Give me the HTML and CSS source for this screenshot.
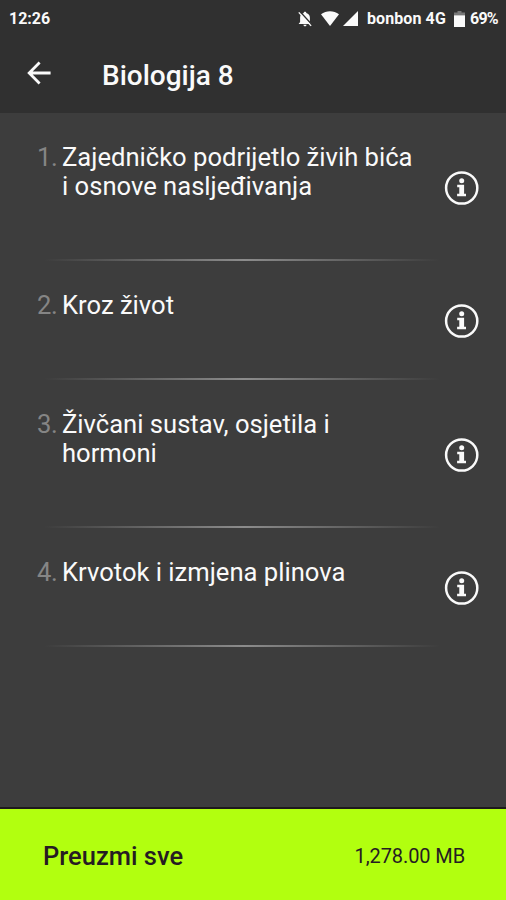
FILE: index.html
```html
<!DOCTYPE html>
<html lang="hr">
<head>
    <meta charset="UTF-8">
    <meta name="viewport" content="width=device-width, initial-scale=1.0">
    <title>Biologija 8</title>
    <link rel="stylesheet" href="styles.css">
</head>
<body>
    <!-- shared info icon -->
    <svg class="defs" width="0" height="0">
        <symbol id="info" viewBox="0 0 36 36">
            <circle cx="17.7" cy="18" r="15.6" fill="none" stroke="currentColor" stroke-width="2.5"/>
            <circle cx="17.7" cy="10.8" r="2.5" fill="currentColor"/>
            <path d="M13.2 14.8h6.900v9h1.900v2.400h-8.900v-2.400h2.200v-6.600h-2.100z" fill="currentColor"/>
        </symbol>
    </svg>

    <div class="screen">
        <header class="header">
            <div class="status-bar">
                <span class="time">12:26</span>
                <div class="status-icons">
                    <svg class="bell" width="16" height="18" viewBox="0 0 16 18">
                        <path d="M8 1.8c.8 0 1.3.5 1.3 1.3 2.3.6 3.6 2.3 3.6 4.6v4.4l1.5 1.8H1.6l1.5-1.8V7.7c0-2.3 1.3-4 3.6-4.6 0-.8.5-1.3 1.3-1.3zM6.4 14.7h3.2c0 .9-.7 1.5-1.6 1.5s-1.6-.6-1.6-1.5z" fill="currentColor"/>
                        <path d="M2.9 1.6l12.300 13.500" stroke="#303030" stroke-width="1.5"/>
                        <path d="M1.800 2.400l12.300 13.500" stroke="currentColor" stroke-width="1.4"/>
                    </svg>
                    <svg class="wifi" width="18" height="15" viewBox="0 0 18 15">
                        <path d="M0 3.3C5.3-.9 12.7-.9 18 3.3L9 15z" fill="currentColor"/>
                    </svg>
                    <svg class="signal" width="15" height="15" viewBox="0 0 15 15">
                        <path d="M15 0v15H0z" fill="currentColor"/>
                    </svg>
                    <span class="carrier">bonbon 4G</span>
                    <svg class="battery" width="11" height="16" viewBox="0 0 11 16">
                        <path d="M3.5 0h4v1.6H11V4.5H0V1.6h3.5z" fill="#777"/>
                        <path d="M0 4.3h11V16H0z" fill="currentColor"/>
                    </svg>
                    <span class="percent">69%</span>
                </div>
            </div>
            <div class="toolbar">
                <svg class="back" width="24" height="24" viewBox="0 0 24 24">
                    <path d="M12.6 1.6L2.2 12l10.4 10.4M2.6 12H23.6" fill="none" stroke="currentColor" stroke-width="2.800"/>
                </svg>
                <h1>Biologija 8</h1>
            </div>
        </header>

        <main class="content">
            <ol class="topics">
                <li class="topic tall">
                    <span class="num">1.</span>
                    <span class="name">Zajedničko podrijetlo živih bića<br>i osnove nasljeđivanja</span>
                </li>
                <li class="topic">
                    <span class="num">2.</span>
                    <span class="name">Kroz život</span>
                </li>
                <li class="topic tall">
                    <span class="num">3.</span>
                    <span class="name">Živčani sustav, osjetila i<br>hormoni</span>
                </li>
                <li class="topic">
                    <span class="num">4.</span>
                    <span class="name">Krvotok i izmjena plinova</span>
                </li>
            </ol>
            <div class="info-list">
                <svg class="info"><use href="#info"/></svg>
                <svg class="info"><use href="#info"/></svg>
                <svg class="info"><use href="#info"/></svg>
                <svg class="info"><use href="#info"/></svg>
            </div>
        </main>

        <footer class="download">
            <span class="label">Preuzmi sve</span>
            <span class="size">1,278.00 MB</span>
        </footer>
    </div>
</body>
</html>
```

FILE: styles.css
```css
* {
    margin: 0;
    padding: 0;
    box-sizing: border-box;
}

body {
    background: #3d3d3d;
    color: #fafafa;
    font-family: Roboto, "Liberation Sans", sans-serif;
}

.defs {
    position: absolute;
}

.screen {
    display: flex;
    flex-direction: column;
    height: 900px;
}

svg {
    flex-shrink: 0;
}

/* header */
.header {
    height: 113px;
    background: #303030;
}

.status-bar {
    display: flex;
    justify-content: space-between;
    align-items: center;
    height: 36px;
    padding: 1px 8px 0 9px;
    font-size: 16px;
    font-weight: 700;
    line-height: 35px;
}

.status-icons {
    display: flex;
    align-items: center;
}

.wifi {
    margin-left: 8px;
}

.signal {
    margin-left: 4px;
}

.carrier {
    margin-left: 9px;
    letter-spacing: 0.1px;
}

.battery {
    margin-left: 8px;
}

.percent {
    margin-left: 5px;
    letter-spacing: -0.7px;
}

.toolbar {
    display: flex;
    align-items: center;
    height: 77px;
    padding: 0 0 2px 27px;
}

.back {
    margin-bottom: 2px;
}

.toolbar h1 {
    margin: 4px 0 0 51px;
    font-size: 28px;
    font-weight: 500;
}

/* topics */
.content {
    display: flex;
    flex: 1;
    align-items: flex-start;
}

.topics {
    width: 444px;
    list-style: none;
}

.topic {
    display: flex;
    height: 118.7px;
    padding: 29.5px 0 0 37px;
    font-size: 25.6px;
    line-height: 29.7px;
    background: linear-gradient(to right, transparent 44px, #8c8c8c 55%, transparent 440px) left bottom / 100% 2px no-repeat;
}

.topic.tall {
    height: 148.4px;
}

.num {
    width: 25px;
    color: #858585;
    letter-spacing: -0.5px;
}

.name {
    white-space: nowrap;
}

.info-list {
    display: flex;
    flex-direction: column;
    gap: 97.6px;
    padding-top: 56.5px;
}

.info {
    display: block;
    width: 36px;
    height: 36px;
}

/* download bar */
.download {
    display: flex;
    justify-content: space-between;
    align-items: center;
    height: 93px;
    padding: 2px 41px 0 43px;
    border-top: 2px solid #1e1a1c;
    background: #b2ff0f;
    color: #261c22;
}

.label {
    font-size: 25.5px;
    font-weight: 500;
}

.size {
    font-size: 20px;
    letter-spacing: -0.1px;
}
```
